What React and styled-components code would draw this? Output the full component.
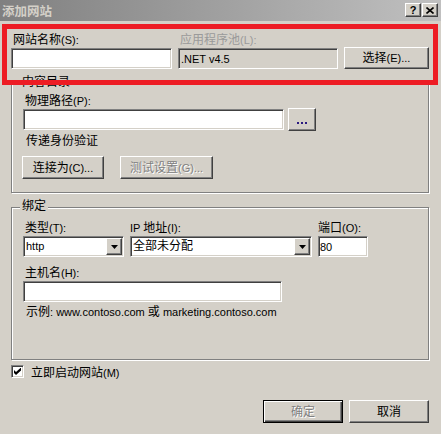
import React from 'react';
import styled, { createGlobalStyle } from 'styled-components';

const Global = createGlobalStyle`
  html, body { margin: 0; padding: 0; background: #d4d0c8; }
  *, *::before, *::after { box-sizing: border-box; }
  body {
    font-family: "Liberation Sans", "Noto Sans CJK SC", sans-serif;
    font-size: 12px;
    color: #000;
  }
`;

const Window = styled.div`
  position: relative;
  width: 441px;
  height: 434px;
  background: #d4d0c8;
  display: flex;
  flex-direction: column;
  overflow: hidden;
`;

const TitleBar = styled.div`
  flex: none;
  height: 21px;
  display: flex;
  justify-content: space-between;
  background: linear-gradient(to right, #808080, #c0c0c0);
  padding: 0 3px 0 2px;
`;

const Title = styled.div`
  font-family: "Noto Sans CJK SC", sans-serif;
  font-weight: 700;
  font-size: 12.5px;
  line-height: 21px;
  color: #d4d0c8;
`;

const CaptionButtons = styled.div`
  display: flex;
  gap: 1px;
  margin-top: 3px;
`;

const CaptionButton = styled.div`
  width: 16px;
  height: 14px;
  background: #d4d0c8;
  border: 1px solid;
  border-color: #fff #404040 #404040 #fff;
  box-shadow: inset -1px -1px #808080;
  display: flex;
  align-items: center;
  justify-content: center;
  font-family: "Liberation Sans", sans-serif;
  font-weight: 700;
  font-size: 11px;
  line-height: 1;
`;

const Body = styled.div`
  flex: 1;
  display: flex;
  flex-direction: column;
  padding: 12px 12px 0 11px;
`;

const TopGrid = styled.div`
  display: grid;
  grid-template-columns: 161px 160px 85px;
  grid-template-rows: 14px 22px;
  column-gap: 6px;
  align-items: end;
`;

const Latin = styled.span`
  font-size: 11px;
`;

const Label = styled.div`
  height: 14px;
  line-height: 14px;
  padding-left: ${(p) => p.$indent ?? 2}px;
  margin-bottom: ${(p) => p.$mb ?? 0}px;
  margin-top: ${(p) => p.$mt ?? 0}px;
  white-space: nowrap;
  color: ${(p) => (p.$disabled ? '#9a9a9a' : '#000')};
`;

const Field = styled.input`
  display: block;
  width: ${(p) => p.$w}px;
  height: 21px;
  margin: 0;
  padding: 0 0 0 ${(p) => p.$pad ?? 2}px;
  border: 1px solid;
  border-color: #808080 #fff #fff #808080;
  box-shadow: inset 1px 1px #404040, inset -1px -1px #d4d0c8;
  background: ${(p) => (p.$readonly ? '#d4d0c8' : '#fff')};
  font-family: "Liberation Sans", "Noto Sans CJK SC", sans-serif;
  font-size: 11px;
  color: #000;
  outline: none;
  border-radius: 0;
`;

const Button = styled.div`
  width: ${(p) => p.$w}px;
  height: ${(p) => p.$h ?? 23}px;
  display: flex;
  align-items: center;
  justify-content: center;
  background: #d4d0c8;
  border: 1px solid;
  border-color: ${(p) => (p.$default ? '#000' : '#fff #404040 #404040 #fff')};
  box-shadow: ${(p) =>
    p.$default
      ? 'inset 1px 1px #fff, inset -1px -1px #404040, inset -2px -2px #808080'
      : 'inset -1px -1px #808080'};
  color: ${(p) => (p.$disabled ? '#808080' : '#000')};
  text-shadow: ${(p) => (p.$disabled ? '1px 1px #fff' : 'none')};
  white-space: nowrap;
  line-height: 14px;
  margin-left: ${(p) => p.$ml ?? 0}px;
`;

const Group = styled.div`
  position: relative;
  margin-top: 14px;
  width: 418px;
  border: 1px solid #808080;
  box-shadow: inset 1px 1px #fff, 1px 1px #fff;
  padding: ${(p) => p.$pad};
  display: flex;
  flex-direction: column;
`;

const Legend = styled.span`
  position: absolute;
  top: -9px;
  left: 8px;
  padding: 0 2px;
  line-height: 14px;
  background: #d4d0c8;
`;

const PathRow = styled.div`
  display: flex;
  align-items: center;
  gap: 4px;
  height: 23px;
`;

const Dots = styled.div`
  display: flex;
  gap: 2px;
  margin-top: 6px;
`;

const Dot = styled.span`
  width: 2px;
  height: 2px;
  background: #2a1a80;
`;

const ButtonRow = styled.div`
  display: flex;
  gap: 16px;
  margin-top: ${(p) => p.$mt ?? 0}px;
`;

const BindGrid = styled.div`
  display: grid;
  grid-template-columns: 101px 182px 50px;
  grid-template-rows: 14px 21px;
  column-gap: 6px;
  row-gap: 1px;
`;

const Select = styled.div`
  position: relative;
  height: 21px;
  display: flex;
  align-items: center;
  border: 1px solid;
  border-color: #808080 #fff #fff #808080;
  box-shadow: inset 1px 1px #404040, inset -1px -1px #d4d0c8;
  background: #fff;
  padding: 0 1px 0 2px;
`;

const SelectValue = styled.span`
  flex: 1;
  font-size: 12px;
  line-height: 17px;
  white-space: nowrap;
  overflow: hidden;
`;

const ArrowButton = styled.div`
  width: 16px;
  height: 17px;
  flex: none;
  display: flex;
  align-items: center;
  justify-content: center;
  background: #d4d0c8;
  border: 1px solid;
  border-color: #fff #404040 #404040 #fff;
  box-shadow: inset -1px -1px #808080;
`;

const Hint = styled.div`
  margin-top: 3px;
  padding-left: 3px;
  line-height: 14px;
  height: 14px;
  white-space: nowrap;
`;

const CheckRow = styled.div`
  display: flex;
  align-items: center;
  gap: 7px;
  margin-top: 4px;
  height: 14px;
`;

const CheckBox = styled.div`
  width: 13px;
  height: 13px;
  flex: none;
  border: 1px solid;
  border-color: #808080 #fff #fff #808080;
  box-shadow: inset 1px 1px #404040, inset -1px -1px #d4d0c8;
  background: #fff;
  display: flex;
  align-items: center;
  justify-content: center;
`;

const Footer = styled.div`
  display: flex;
  justify-content: flex-end;
  gap: 6px;
  margin-top: 22px;
`;

const Highlight = styled.div`
  position: absolute;
  left: 2px;
  top: 24px;
  width: 436px;
  height: 61px;
  border: 5px solid #ed1c24;
  pointer-events: none;
  z-index: 2;
`;

const Arrow = () => (
  <svg width="7" height="4" viewBox="0 0 7 4">
    <polygon points="0,0 7,0 3.5,4" fill="#000" />
  </svg>
);

const Combo = ({ children }) => (
  <Select>
    <SelectValue>{children}</SelectValue>
    <ArrowButton>
      <Arrow />
    </ArrowButton>
  </Select>
);

export default function App() {
  return (
    <>
      <Global />
      <Window>
        <TitleBar>
          <Title>添加网站</Title>
          <CaptionButtons>
            <CaptionButton>?</CaptionButton>
            <CaptionButton>
              <svg width="8" height="7" viewBox="0 0 8 7">
                <path d="M0.5 0.5 L7.5 6.5 M7.5 0.5 L0.5 6.5" stroke="#000" strokeWidth="1.6" />
              </svg>
            </CaptionButton>
          </CaptionButtons>
        </TitleBar>

        <Body>
          <TopGrid>
            <Label>
              网站名称<Latin>(S):</Latin>
            </Label>
            <Label $disabled>
              应用程序池<Latin>(L):</Latin>
            </Label>
            <span />
            <Field $w={161} defaultValue="" />
            <Field $w={160} $readonly readOnly defaultValue=".NET v4.5" />
            <Button $w={85} $h={22}>
              选择<Latin>(E)...</Latin>
            </Button>
          </TopGrid>

          <Group $pad="10px 11px 13px 11px">
            <Legend>内容目录</Legend>
            <Label>
              物理路径<Latin>(P):</Latin>
            </Label>
            <PathRow>
              <Field $w={261} defaultValue="" />
              <Button $w={28}>
                <Dots>
                  <Dot />
                  <Dot />
                  <Dot />
                </Dots>
              </Button>
            </PathRow>
            <Label $mt={3} $indent={3}>传递身份验证</Label>
            <ButtonRow $mt={8}>
              <Button $w={82} $ml={-1}>
                连接为<Latin>(C)...</Latin>
              </Button>
              <Button $w={93} $disabled>
                测试设置<Latin>(G)...</Latin>
              </Button>
            </ButtonRow>
          </Group>

          <Group $pad="13px 11px 40px 11px">
            <Legend>绑定</Legend>
            <BindGrid>
              <Label>
                类型<Latin>(T):</Latin>
              </Label>
              <Label $indent={0}>
                <Latin>IP </Latin>地址<Latin>(I):</Latin>
              </Label>
              <Label $indent={0}>
                端口<Latin>(O):</Latin>
              </Label>
              <Combo>
                <Latin>http</Latin>
              </Combo>
              <Combo>全部未分配</Combo>
              <Field $w={50} $pad={1} defaultValue="80" />
            </BindGrid>
            <Label $mt={9} $mb={1}>
              主机名<Latin>(H):</Latin>
            </Label>
            <Field $w={259} defaultValue="" />
            <Hint>
              示例<Latin>: www.contoso.com </Latin>或<Latin> marketing.contoso.com</Latin>
            </Hint>
          </Group>

          <CheckRow>
            <CheckBox>
              <svg width="7" height="7" viewBox="0 0 7 7">
                <polygon points="0,2 2,4 7,-0.5 7,2.5 2,7 0,5" fill="#000" />
              </svg>
            </CheckBox>
            <span>
              立即启动网站<Latin>(M)</Latin>
            </span>
          </CheckRow>

          <Footer>
            <Button $w={80} $default $disabled>
              确定
            </Button>
            <Button $w={80}>取消</Button>
          </Footer>
        </Body>

        <Highlight />
      </Window>
    </>
  );
}
